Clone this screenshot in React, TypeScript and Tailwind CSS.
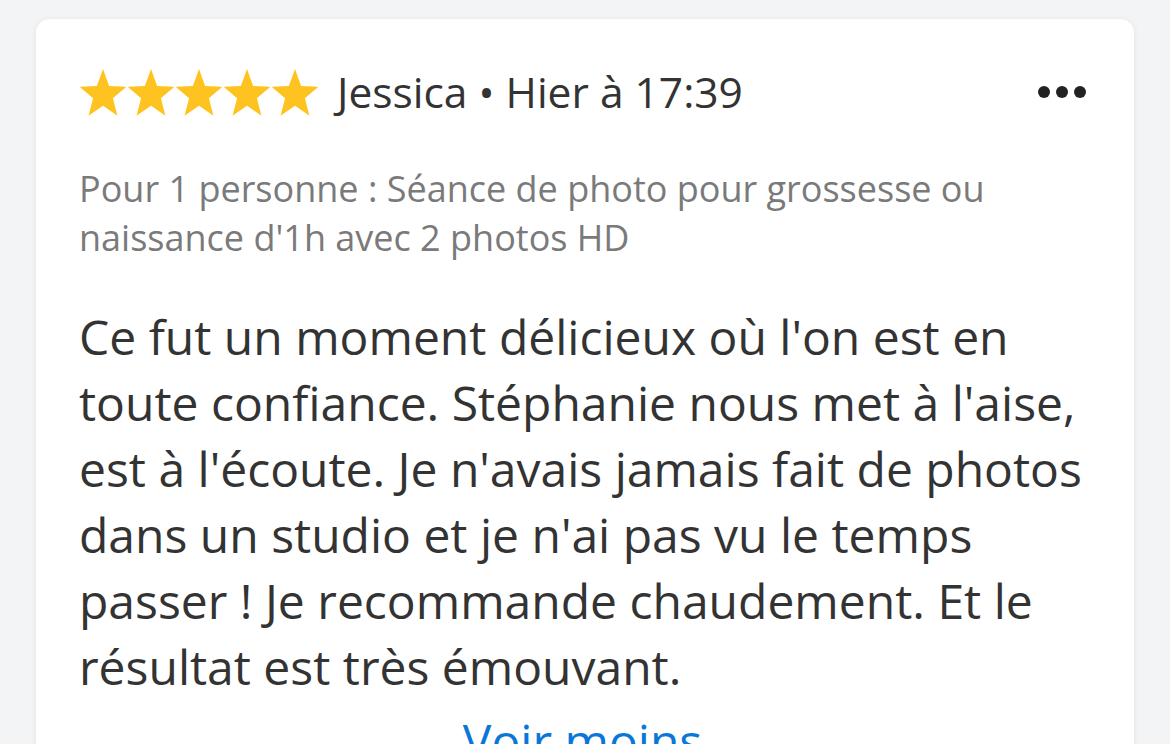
import React from 'react';

const Star = () => (
    <svg viewBox="0 0.3 24 22.4" preserveAspectRatio="none" className="w-[48px] h-[47px]" fill="#ffc321">
        <path d="M12 0.3L15.06 8.39 23.7 8.8 16.95 14.21 19.23 22.55 12 17.8 4.77 22.55 7.05 14.21 0.3 8.8 8.94 8.39Z" />
    </svg>
);

export default function App() {
    return (
        <div className="min-h-screen bg-[#f3f4f6] px-[36px] pt-[19px] overflow-hidden" style={{ fontFamily: '"Open Sans", sans-serif' }}>
            <div className="bg-white rounded-[14px] shadow-[0_1px_6px_rgba(0,0,0,0.08)] pl-[43px] pr-[48px] pt-[45px] pb-[40px] h-[760px]">
                {/* Header */}
                <div className="flex items-center h-[56px]">
                    <div className="flex items-center">
                        {[0, 1, 2, 3, 4].map((i) => (
                            <Star key={i} />
                        ))}
                    </div>
                    <span className="ml-[18px] text-[42.5px] text-[#333333] leading-none">
                        Jessica • Hier à 17:39
                    </span>
                    <div className="ml-auto flex items-center gap-[6px]">
                        <span className="w-[12px] h-[12px] rounded-full bg-[#222]" />
                        <span className="w-[12px] h-[12px] rounded-full bg-[#222]" />
                        <span className="w-[12px] h-[12px] rounded-full bg-[#222]" />
                    </div>
                </div>

                {/* Offer */}
                <p className="mt-[44px] text-[36px] leading-[49px] text-[#7a7a7a] pr-[60px]">
                    Pour 1 personne : Séance de photo pour grossesse ou naissance d'1h avec 2 photos HD
                </p>

                {/* Review */}
                <p className="mt-[42px] text-[48px] leading-[66px] text-[#333333]">
                    Ce fut un moment délicieux où l'on est en toute confiance. Stéphanie nous met à l'aise, est à l'écoute. Je n'avais jamais fait de photos dans un studio et je n'ai pas vu le temps passer ! Je recommande chaudement. Et le résultat est très émouvant.
                </p>

                <div className="text-center mt-[8px]">
                    <span className="text-[48px] leading-[66px] text-[#0a77d8]">Voir moins</span>
                </div>
            </div>
        </div>
    );
}
